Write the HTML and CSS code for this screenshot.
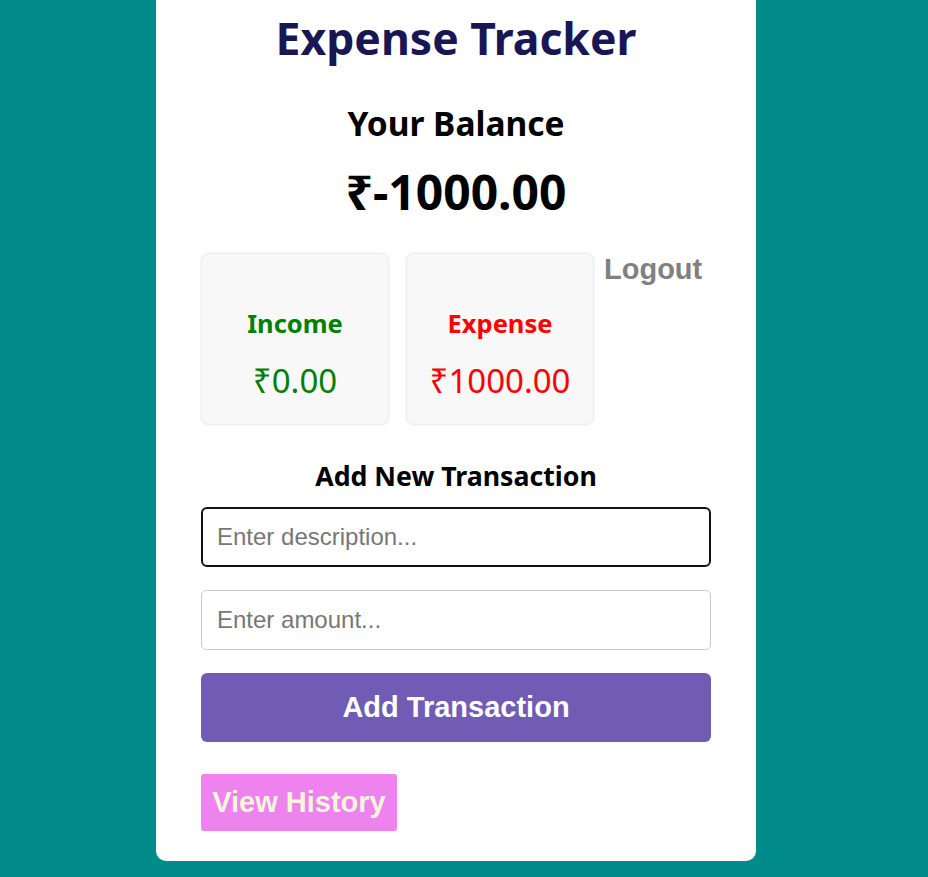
FILE: index.html
```html
<!DOCTYPE html>
<html lang="en">
<head>
  <meta charset="UTF-8" />
  <meta name="viewport" content="width=device-width, initial-scale=1.0" />
  <title>Expense Tracker</title>
  <link rel="stylesheet" href="styles.css">
</head>
<body>
  <div class="container">
    <h1>Expense Tracker</h1>
    <h2>Your Balance</h2>
    <div class="balance" id="balance">₹-1000.00</div>

    <div class="summary">
      <div class="box">
        <h3 class="income">Income</h3>
        <p class="money income" id="income">₹0.00</p>
      </div>
      <div class="box">
        <h3 class="expense">Expense</h3>
        <p class="money expense" id="expense">₹1000.00</p>
      </div>
      <button class="logout">Logout</button>
    </div>

    <h3 class="add-title">Add New Transaction</h3>
    <form id="form">
      <input type="text" id="text" class="field active" placeholder="Enter description..." autofocus />
      <input type="number" id="amount" class="field" placeholder="Enter amount..." />
      <button type="submit" class="add-btn">Add Transaction</button>
    </form>
    <button class="history-btn">View History</button>
  </div>
</body>
</html>
```

FILE: styles.css
```css
body {
  margin: 0;
  padding-right: 16px;
  background: #008b8b;
  font-family: 'Noto Sans', 'DejaVu Sans', sans-serif;
}
.container {
  width: 510px;
  margin: 0 auto;
  background: #fff;
  padding: 8px 45px 30px;
  border-radius: 0 0 10px 10px;
  text-align: center;
}
h1 {
  margin: 0;
  font-size: 44.5px;
  line-height: 60px;
  color: #191654;
}
h2 {
  margin: 34px 0 0;
  font-size: 33.5px;
  line-height: 42px;
  color: #000;
}
.balance {
  margin-top: 20px;
  font-size: 48px;
  font-weight: bold;
  line-height: 56px;
}
.summary {
  display: flex;
  align-items: flex-start;
  gap: 17px;
  margin-top: 33px;
}
.box {
  width: 188px;
  height: 172px;
  box-sizing: border-box;
  background: #f8f8f8;
  border: 1px solid #ececec;
  border-radius: 8px;
  box-shadow: 0 0 4px rgba(0,0,0,0.06);
  display: flex;
  flex-direction: column;
  justify-content: center;
  padding-top: 30px;
}
.box h3 {
  margin: 0;
  font-size: 25.5px;
  line-height: 32px;
}
.money {
  margin: 22px 0 0;
  font-size: 33px;
  line-height: 40px;
}
.income { color: #008000; }
.expense { color: #ff0000; }
.logout {
  background: none;
  border: none;
  padding: 0;
  margin: 0 0 0 -7px;
  font-family: 'Liberation Sans', Arial, sans-serif;
  font-size: 29px;
  font-weight: bold;
  color: #808080;
  line-height: 32px;
}
.add-title {
  margin: 34px 0 14px;
  font-size: 26.7px;
  line-height: 34px;
}
form {
  display: flex;
  flex-direction: column;
  gap: 23px;
}
.field {
  height: 60px;
  box-sizing: border-box;
  border: 1px solid #ccc;
  border-radius: 5px;
  padding: 0 15px;
  font-family: 'Liberation Sans', Arial, sans-serif;
  font-size: 24px;
  color: #222;
}
.field::placeholder {
  color: #777;
}
.field.active,
.field:focus {
  border: 2px solid #111;
  border-radius: 6px;
  outline: none;
  padding-left: 14px;
}
.add-btn {
  height: 69px;
  background: #705bb5;
  color: #fff;
  border: none;
  border-radius: 6px;
  font-family: 'Liberation Sans', Arial, sans-serif;
  font-size: 29px;
  font-weight: bold;
}
.history-btn {
  display: block;
  margin-top: 32px;
  width: 196px;
  height: 57px;
  background: #ee82ee;
  color: #f5f5dc;
  border: none;
  border-radius: 3px;
  font-family: 'Liberation Sans', Arial, sans-serif;
  font-size: 29px;
  font-weight: bold;
  padding: 0;
}
```
